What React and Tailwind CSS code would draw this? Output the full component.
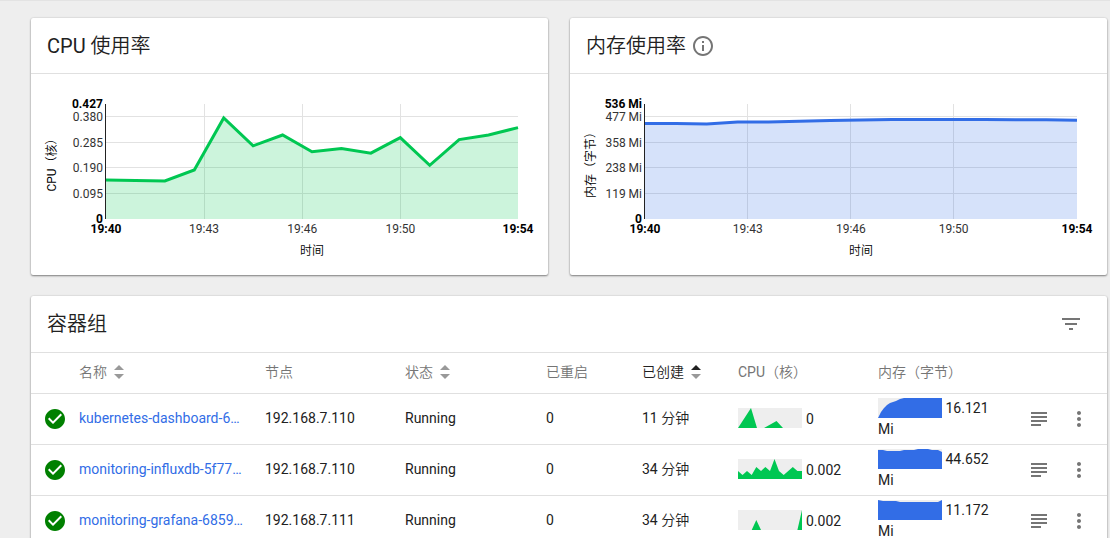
import { useLayoutEffect, useRef, useState } from 'react';
import {
  MdCheckCircle,
  MdFilterList,
  MdInfoOutline,
  MdMoreVert,
  MdSubject,
} from 'react-icons/md';

const TICKS = [
  { at: 0, label: '19:40' },
  { at: 0.238, label: '19:43' },
  { at: 0.4765, label: '19:46' },
  { at: 0.7145, label: '19:50' },
  { at: 1, label: '19:54' },
];

const GRID_Y = [43, 69, 94, 120];
const TOP = 30;
const BOTTOM = 145;
const LEFT = 75;
const RIGHT_MARGIN = 30;

const CPU_POINTS = [106, 106.6, 107, 96, 44, 71.8, 61, 77.8, 74.5, 79.2, 63.6, 91.3, 65.6, 61, 53.6];
const MEMORY_POINTS = [49.6, 49.6, 50, 48.1, 48.1, 47.3, 46.5, 46, 45.6, 45.5, 45.5, 45.6, 45.8, 45.8, 46.2];

function UsageChart({ points, color, yLabels, yTitle, max }) {
  const box = useRef(null);
  const [width, setWidth] = useState(518);

  useLayoutEffect(() => {
    const measure = () => setWidth(Math.round(box.current.clientWidth));
    measure();
    const observer = new ResizeObserver(measure);
    observer.observe(box.current);
    return () => observer.disconnect();
  }, []);

  const plotWidth = width - RIGHT_MARGIN - LEFT;
  const line = points
    .map((y, i) => `${LEFT + (plotWidth * i) / (points.length - 1)},${y}`)
    .join(' ');
  const middle = LEFT + plotWidth / 2;

  return (
    <div ref={box} className="w-full">
      <svg width={width} height="201" className="block text-xs" role="img" aria-label={yTitle}>
        {GRID_Y.map((y) => (
          <line key={y} x1={LEFT} x2={LEFT + plotWidth} y1={y - 0.5} y2={y - 0.5} stroke="#e2e2e2" />
        ))}
        {TICKS.slice(1, -1).map(({ at }) => {
          const x = Math.floor(LEFT + plotWidth * at) + 0.5;
          return <line key={at} x1={x} x2={x} y1={TOP} y2={BOTTOM} stroke="#e2e2e2" />;
        })}
        <polygon
          points={`${LEFT},${BOTTOM} ${line} ${LEFT + plotWidth},${BOTTOM}`}
          fill={color}
          fillOpacity="0.2"
        />
        <polyline points={line} fill="none" stroke={color} strokeWidth="3" />
        <line x1={LEFT - 0.5} x2={LEFT - 0.5} y1={TOP} y2={BOTTOM} stroke="#222" />
        <g textAnchor="end" fill="#333">
          <text x={LEFT - 3} y="34" className="font-bold" fill="#000">{max}</text>
          {yLabels.map((label, i) => (
            <text key={label} x={LEFT - 3} y={GRID_Y[i] + 4}>{label}</text>
          ))}
          <text x={LEFT - 3} y="149" className="font-bold" fill="#000">0</text>
        </g>
        <g textAnchor="middle" fill="#333">
          {TICKS.map(({ at, label }) => (
            <text
              key={label}
              x={LEFT + plotWidth * at}
              y="159"
              className={at === 0 || at === 1 ? 'fill-black font-bold' : ''}
            >
              {label}
            </text>
          ))}
        </g>
        <text x={middle} y="181" textAnchor="middle">时间</text>
        <text x="-88" y="25" textAnchor="middle" transform="rotate(-90)">{yTitle}</text>
      </svg>
    </div>
  );
}

function Card({ title, action, headerHeight = 'min-h-14', children }) {
  return (
    <section className="min-w-0 rounded-xs bg-white shadow-[0_1px_2px_rgba(0,0,0,0.45),0_0_2px_rgba(0,0,0,0.15)]">
      <header className={`flex items-center justify-between border-b border-[#e0e0e0] pr-6 pl-4 ${headerHeight}`}>
        {title}
        {action}
      </header>
      {children}
    </section>
  );
}

function Title({ children }) {
  return <h2 className="text-xl font-normal text-[#212121]">{children}</h2>;
}

function Sortable({ children, active }) {
  return (
    <button type="button" className="flex items-center gap-[7px]">
      {children}
      <svg width="10" height="14" viewBox="0 0 10 14" aria-hidden="true">
        <path d="M0 5 5 0l5 5z" fill={active ? '#212121' : '#999'} />
        <path d="M0 9h10l-5 5z" fill="#999" />
      </svg>
    </button>
  );
}

function Sparkline({ points, color }) {
  return (
    <svg width="64" height="20" className="inline-block shrink-0 bg-[#eee] align-top" aria-hidden="true">
      <polygon points={points} fill={color} />
    </svg>
  );
}

const PODS = [
  {
    name: 'kubernetes-dashboard-6…',
    node: '192.168.7.110',
    age: '11 分钟',
    cpu: '0',
    memory: '16.121 Mi',
    cpuShape: '0,20 13,0 19,20 26,20 38.5,13 45,20',
    memoryShape: '0,20 3,14 6,10 9,7 12,5 15,4 18,3 22,1 26,0 64,0 64,20',
  },
  {
    name: 'monitoring-influxdb-5f77…',
    node: '192.168.7.110',
    age: '34 分钟',
    cpu: '0.002',
    memory: '44.652 Mi',
    cpuShape: '0,20 0,12 4.5,16 9,12 13.7,16 18.3,8 23,12 27.4,8 32,12 36.5,0 41,12 45.7,16 54.8,8 59.4,12 64,12 64,20',
    memoryShape: '0,20 0,1 5,1 9,2 22,2 26,1 36,1 40,0 50,0 54,1 60,1 64,3 64,20',
  },
  {
    name: 'monitoring-grafana-6859…',
    node: '192.168.7.111',
    age: '34 分钟',
    cpu: '0.002',
    memory: '11.172 Mi',
    cpuShape: '13.7,20 18.3,10 23,20 59.4,20 64,0 64,20',
    memoryShape: '0,20 0,0 5,1 18,1 22,2 60,2 64,0 64,20',
  },
];

export default function App() {
  return (
    <main className="h-screen overflow-hidden border-t border-[#e3e3e3] bg-[#eee] pt-[17px] pr-[3px] pl-[31px] font-[Roboto,'Noto_Sans_CJK_SC_DemiLight','Noto_Sans_CJK_SC_Light','Noto_Sans_CJK_SC',sans-serif] text-sm text-[#212121]">
      <div className="grid grid-cols-[calc(50%-21px)_1fr] gap-[22px]">
        <Card title={<Title>CPU 使用率</Title>}>
          <UsageChart
            points={CPU_POINTS}
            color="#00c752"
            max="0.427"
            yLabels={['0.380', '0.285', '0.190', '0.095']}
            yTitle="CPU（核）"
          />
        </Card>
        <Card
          title={
            <div className="flex items-center gap-[5px]">
              <Title>内存使用率</Title>
              <MdInfoOutline size={24} className="text-[#757575]" />
            </div>
          }
        >
          <UsageChart
            points={MEMORY_POINTS}
            color="#326de6"
            max="536 Mi"
            yLabels={['477 Mi', '358 Mi', '238 Mi', '119 Mi']}
            yTitle="内存（字节）"
          />
        </Card>
      </div>

      <div className="pt-[21px]">
        <Card
          title={<Title>容器组</Title>}
          headerHeight="min-h-[57px]"
          action={
            <button type="button" aria-label="筛选" className="text-[#757575]">
              <MdFilterList size={24} />
            </button>
          }
        >
          <table className="w-full table-fixed border-collapse text-left">
            <colgroup>
              <col className="w-12" />
              <col className="w-[186px]" />
              <col className="w-[140px]" />
              <col className="w-[141px]" />
              <col className="w-24" />
              <col className="w-24" />
              <col className="w-[140px]" />
              <col />
              <col className="w-10" />
              <col className="w-12" />
            </colgroup>
            <thead className="text-[#757575]">
              <tr className="h-10 border-b border-[#e0e0e0] [&>th]:p-0 [&>th]:pb-0.5 [&>th]:font-normal">
                <th />
                <th><Sortable>名称</Sortable></th>
                <th>节点</th>
                <th><Sortable>状态</Sortable></th>
                <th>已重启</th>
                <th className="text-[#212121]"><Sortable active>已创建</Sortable></th>
                <th>CPU（核）</th>
                <th>内存（字节）</th>
                <th />
                <th />
              </tr>
            </thead>
            <tbody>
              {PODS.map((pod) => (
                <tr key={pod.name} className="h-[51px] border-b border-[#e0e0e0] [&>td]:p-0">
                  <td className="text-[#008000]">
                    <MdCheckCircle size={24} className="mx-auto" />
                  </td>
                  <td>
                    <a href="#pod" className="block truncate pr-2 pb-0.5 text-[#326de6]">{pod.name}</a>
                  </td>
                  <td><div className="pb-0.5">{pod.node}</div></td>
                  <td><div className="pb-0.5">Running</div></td>
                  <td><div className="pb-0.5">0</div></td>
                  <td><div className="pb-0.5">{pod.age}</div></td>
                  <td>
                    <div className="flex items-end gap-1 pb-px leading-[18px]">
                      <Sparkline points={pod.cpuShape} color="#00c752" />
                      {pod.cpu}
                    </div>
                  </td>
                  <td>
                    <div className="w-[120px] leading-[21px]">
                      <Sparkline points={pod.memoryShape} color="#326de6" /> {pod.memory}
                    </div>
                  </td>
                  <td className="text-[#757575]">
                    <button type="button" aria-label="日志" className="mx-auto block">
                      <MdSubject size={24} />
                    </button>
                  </td>
                  <td className="text-[#757575]">
                    <button type="button" aria-label="更多" className="ml-2 block">
                      <MdMoreVert size={24} />
                    </button>
                  </td>
                </tr>
              ))}
            </tbody>
          </table>
        </Card>
      </div>
    </main>
  );
}
